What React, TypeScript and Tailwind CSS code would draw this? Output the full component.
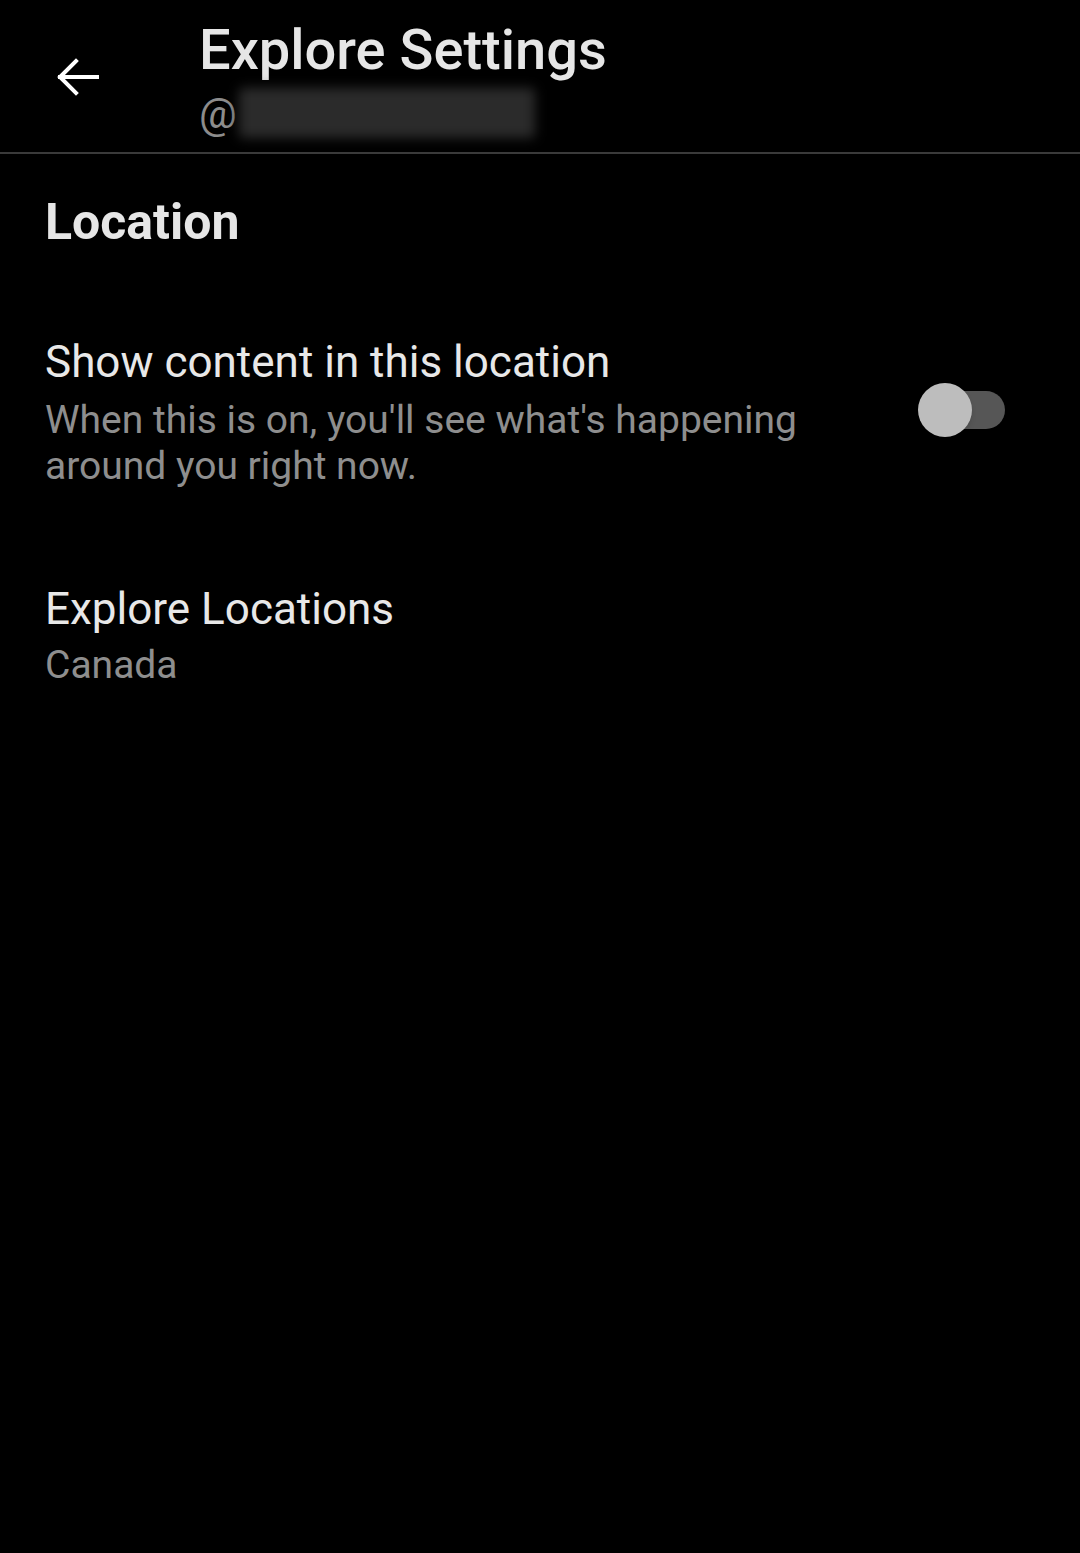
import React, { useState } from 'react';

const BackArrow: React.FC = () => (
  <svg width="44" height="40" viewBox="0 0 44 40" fill="none" stroke="currentColor" strokeWidth="4" strokeLinecap="square">
    <path d="M42 20H5" />
    <path d="M21 4L5 20l16 16" />
  </svg>
);

const App: React.FC = () => {
  const [showLocal, setShowLocal] = useState(false);

  return (
    <div className="w-[1080px] min-h-[1553px] bg-black text-[#e8e8e8] font-['Roboto','Liberation_Sans',sans-serif]">
      {/* Header */}
      <div className="h-[154px] flex border-b-2 border-[#3a3a3a]">
        <button className="w-[199px] pl-[55px] pt-[57px] flex items-start text-white">
          <BackArrow />
        </button>
        <div className="flex flex-col pt-[16px]">
          <h1 className="text-[56px] leading-[68px] font-medium text-[#e6e6e6]">Explore Settings</h1>
          <div className="flex items-center h-[58px]">
            <span className="text-[42px] text-[#8c8c8c]">@</span>
            <div className="ml-[2px] w-[296px] h-[50px] bg-[#2b2b2b] blur-[6px] rounded-sm" />
          </div>
        </div>
      </div>

      {/* Section */}
      <div className="px-[45px]">
        <h2 className="pt-[40px] text-[50px] leading-[56px] font-bold text-[#e6e6e6]">Location</h2>

        <div className="mt-[80px] flex items-center justify-between">
          <div className="flex flex-col">
            <span className="text-[44px] leading-[64px] text-[#e8e8e8]">Show content in this location</span>
            <span className="mt-[3px] text-[39px] leading-[46px] text-[#8e8e8e] w-[800px]">
              When this is on, you'll see what's happening around you right now.
            </span>
          </div>
          <button
            onClick={() => setShowLocal(!showLocal)}
            className="relative w-[87px] h-[60px] mr-[30px] flex items-center shrink-0"
          >
            <div className="absolute left-[26px] right-0 h-[38px] rounded-full bg-[#565656]" />
            <div className="absolute left-0 w-[54px] h-[54px] rounded-full bg-[#bdbdbd] shadow-md" />
          </button>
        </div>

        <div className="mt-[92px] flex flex-col">
          <span className="text-[44px] leading-[56px] text-[#e8e8e8]">Explore Locations</span>
          <span className="text-[39px] leading-[56px] text-[#8e8e8e]">Canada</span>
        </div>
      </div>
    </div>
  );
};

export default App;
